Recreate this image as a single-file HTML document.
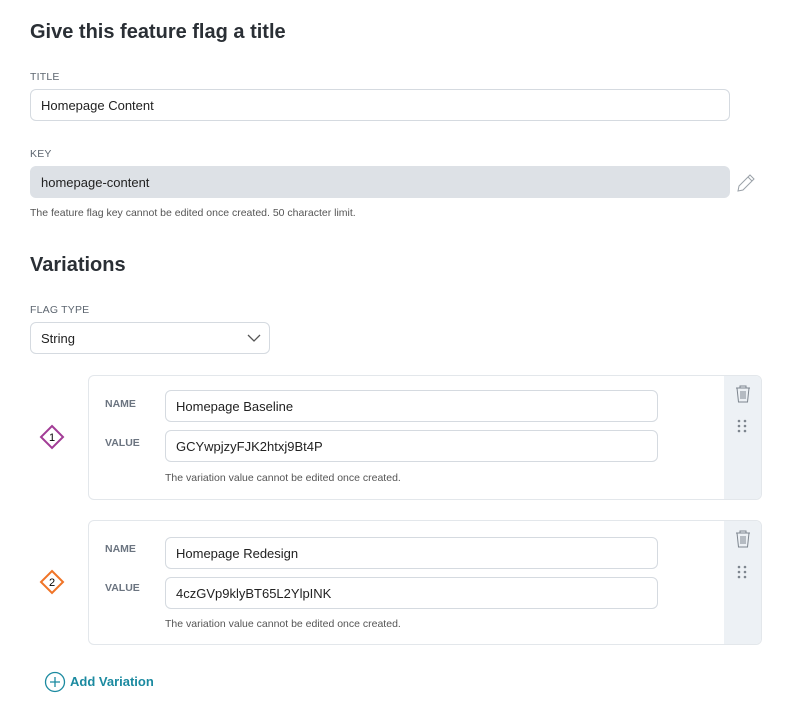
<!DOCTYPE html><html><head><style>
body{margin:0;width:795px;height:716px;background:#fff;font-family:"Liberation Sans",sans-serif;color:#222;position:relative;overflow:hidden}
.a{position:absolute}
h1{position:absolute;margin:0;font-size:20px;font-weight:bold;color:#2a2f35}
.lbl{position:absolute;font-size:10.5px;color:#5d6670;letter-spacing:.2px}
.in{position:absolute;border:1px solid #d5dae0;border-radius:6px;box-sizing:border-box;font-size:13px;padding-left:10px;display:flex;align-items:center;color:#222}
.hint{position:absolute;font-size:10.5px;color:#555}
.card{position:absolute;left:88px;width:674px;height:125px;border:1px solid #e3e7eb;border-radius:6px;box-sizing:border-box;overflow:hidden}
.side{position:absolute;right:0;top:0;width:37px;height:100%;background:#edf1f5}
.vl{position:absolute;left:16px;font-size:10.5px;font-weight:bold;color:#6b7480}
</style></head><body>
<h1 style="left:30px;top:21px">Give this feature flag a title</h1>
<div class="lbl" style="left:30px;top:71px">TITLE</div>
<div class="in" style="left:30px;top:89px;width:700px;height:32px">Homepage Content</div>
<div class="lbl" style="left:30px;top:148px">KEY</div>
<div class="in" style="left:30px;top:166px;width:700px;height:32px;background:#dde1e6;border-color:#dde1e6">homepage-content</div>
<svg class="a" style="left:735px;top:172px" width="22" height="22" viewBox="0 0 22 22"><path d="M3 19l1-5L15 3l4 4L8 18z M13 5l4 4" fill="none" stroke="#9aa1a8" stroke-width="1"/></svg>
<div class="hint" style="left:30px;top:207px">The feature flag key cannot be edited once created. 50 character limit.</div>
<h1 style="left:30px;top:254px">Variations</h1>
<div class="lbl" style="left:30px;top:304px">FLAG TYPE</div>
<div class="in" style="left:30px;top:322px;width:240px;height:32px">String</div>
<svg class="a" style="left:247px;top:333px" width="14" height="10"><path d="M1 2l6 6 6-6" fill="none" stroke="#555" stroke-width="1.3"/></svg>

<div class="card" style="top:375px"><div class="side"></div>
<div class="vl" style="top:22px">NAME</div><div class="vl" style="top:61px">VALUE</div>
<div class="in" style="left:76px;top:14px;width:493px;height:32px">Homepage Baseline</div>
<div class="in" style="left:76px;top:54px;width:493px;height:32px">GCYwpjzyFJK2htxj9Bt4P</div>
<div class="hint" style="left:76px;top:96px">The variation value cannot be edited once created.</div></div>
<div class="card" style="top:520px"><div class="side"></div>
<div class="vl" style="top:22px">NAME</div><div class="vl" style="top:61px">VALUE</div>
<div class="in" style="left:76px;top:16px;width:493px;height:32px">Homepage Redesign</div>
<div class="in" style="left:76px;top:56px;width:493px;height:32px">4czGVp9klyBT65L2YlpINK</div>
<div class="hint" style="left:76px;top:97px">The variation value cannot be edited once created.</div></div>

<svg class="a" style="left:39px;top:424px" width="26" height="26"><path d="M13 2l11 11-11 11L2 13z" fill="#fff" stroke="#a23c96" stroke-width="2"/><text x="13" y="17" font-size="11" text-anchor="middle" font-family="Liberation Sans">1</text></svg>
<svg class="a" style="left:39px;top:569px" width="26" height="26"><path d="M13 2l11 11-11 11L2 13z" fill="#fff" stroke="#f07427" stroke-width="2"/><text x="13" y="17" font-size="11" text-anchor="middle" font-family="Liberation Sans">2</text></svg>

<svg class="a" style="left:734px;top:384px" width="18" height="20"><path d="M2 4h14M6 4V2h6v2M3 4l1.5 14h9L15 4M7 7v8M9 7v8M11 7v8" fill="none" stroke="#7d858e" stroke-width="1"/></svg>
<svg class="a" style="left:734px;top:529px" width="18" height="20"><path d="M2 4h14M6 4V2h6v2M3 4l1.5 14h9L15 4M7 7v8M9 7v8M11 7v8" fill="none" stroke="#7d858e" stroke-width="1"/></svg>
<svg class="a" style="left:737px;top:419px" width="12" height="16" fill="#7d858e"><circle cx="2" cy="2" r="1.3"/><circle cx="8" cy="2" r="1.3"/><circle cx="2" cy="7" r="1.3"/><circle cx="8" cy="7" r="1.3"/><circle cx="2" cy="12" r="1.3"/><circle cx="8" cy="12" r="1.3"/></svg>
<svg class="a" style="left:737px;top:565px" width="12" height="16" fill="#7d858e"><circle cx="2" cy="2" r="1.3"/><circle cx="8" cy="2" r="1.3"/><circle cx="2" cy="7" r="1.3"/><circle cx="8" cy="7" r="1.3"/><circle cx="2" cy="12" r="1.3"/><circle cx="8" cy="12" r="1.3"/></svg>

<svg class="a" style="left:44px;top:671px" width="22" height="22"><circle cx="11" cy="11" r="9.5" fill="none" stroke="#1b8aa0" stroke-width="1.3"/><path d="M11 6v10M6 11h10" stroke="#1b8aa0" stroke-width="1.3"/></svg>
<div class="a" style="left:70px;top:674px;font-size:13px;font-weight:bold;color:#1b8aa0">Add Variation</div>
</body></html>
